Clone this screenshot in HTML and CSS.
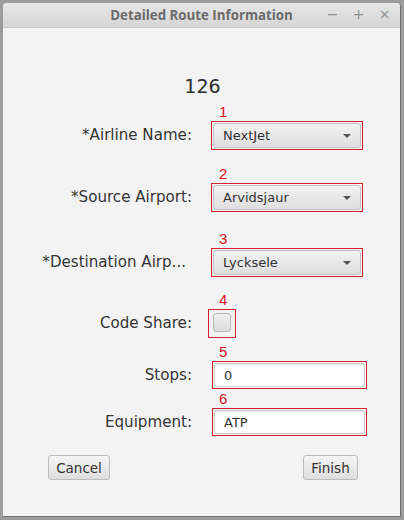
FILE: index.html
```html
<!DOCTYPE html>
<html>
<head>
<meta charset="utf-8">
<link rel="stylesheet" href="styles.css">
</head>
<body>
<div class="window">
  <div class="titlebar">
    <div class="title">Detailed Route Information</div>
    <div class="controls"><span class="ctl">&minus;</span><span class="ctl">+</span><span class="ctl">&times;</span></div>
  </div>
  <div class="content">
    <div class="id">126</div>

    <div class="row r1">
      <div class="label">*Airline Name:</div>
      <div class="field"><div class="num">1</div><div class="hl hl-combo"><div class="combo"><span>NextJet</span><span class="arrow"></span></div></div></div>
    </div>
    <div class="row r2">
      <div class="label">*Source Airport:</div>
      <div class="field"><div class="num">2</div><div class="hl hl-combo"><div class="combo"><span>Arvidsjaur</span><span class="arrow"></span></div></div></div>
    </div>
    <div class="row r3">
      <div class="label label-trunc">*Destination Airp...</div>
      <div class="field"><div class="num">3</div><div class="hl hl-combo"><div class="combo"><span>Lycksele</span><span class="arrow"></span></div></div></div>
    </div>
    <div class="row r4">
      <div class="label">Code Share:</div>
      <div class="field field-check"><div class="num">4</div><div class="hl hl-check"><div class="check"></div></div></div>
    </div>
    <div class="row r5">
      <div class="label label-text">Stops:</div>
      <div class="field field-text"><div class="num">5</div><div class="hl hl-text"><div class="text">0</div></div></div>
    </div>
    <div class="row r6">
      <div class="label label-text">Equipment:</div>
      <div class="field field-text"><div class="num">6</div><div class="hl hl-text"><div class="text">ATP</div></div></div>
    </div>

    <div class="buttons">
      <div class="btn btn-cancel">Cancel</div>
      <div class="btn btn-finish">Finish</div>
    </div>
  </div>
</div>
</body>
</html>
```
FILE: styles.css
```css
html, body {
  margin: 0;
  padding: 0;
}
body {
  width: 404px;
  height: 520px;
  background: #9c9c9c;
  overflow: hidden;
  font-family: "DejaVu Sans", sans-serif;
}
.window {
  margin: 3px 0 0 3px;
  width: 397px;
  height: 513px;
  background: #f3f3f3;
  border-right: 1px solid #6e6e6e;
  border-bottom: 1px solid #6e6e6e;
  border-radius: 4px 4px 0 0;
  overflow: hidden;
  position: relative;
}
.titlebar {
  height: 25px;
  background: linear-gradient(#e6e6e6, #d6d6d6);
  border-bottom: 1px solid #c9c9c9;
  box-sizing: border-box;
  display: flex;
  align-items: center;
  justify-content: center;
  position: relative;
}
.title {
  font-family: "Open Sans", sans-serif;
  font-weight: bold;
  font-size: 13.3px;
  color: #6b6b6b;
}
.controls {
  position: absolute;
  right: 9px;
  top: 3px;
  display: flex;
  gap: 13px;
  font-family: "DejaVu Sans", sans-serif;
  font-size: 14px;
  color: #8e8e8e;
}
.ctl {
  width: 13px;
  text-align: center;
}
.content {
  display: flex;
  flex-direction: column;
}
.id {
  margin-top: 47px;
  height: 22px;
  line-height: 22px;
  text-align: center;
  font-size: 19px;
  color: #2e2e2e;
  margin-left: 2px;
}
.row {
  display: flex;
  align-items: flex-end;
}
.r1 { margin-top: 8px; }
.r2 { margin-top: 17px; }
.r3 { margin-top: 20px; }
.r4 { margin-top: 16px; }
.r5 { margin-top: 7px; }
.r6 { margin-top: 3px; }
.label {
  width: 189px;
  height: 29px;
  line-height: 29px;
  text-align: right;
  font-size: 15.1px;
  color: #333;
  white-space: nowrap;
  box-sizing: border-box;
}
.label-trunc {
  padding-right: 6px;
}
.label-text {
  height: 28px;
  line-height: 28px;
}
.field {
  margin-left: 19px;
  display: flex;
  flex-direction: column;
}
.field-check {
  margin-left: 16px;
}
.field-text {
  margin-left: 20px;
}
.num {
  height: 14px;
  line-height: 14px;
  margin-bottom: 2px;
  padding-left: 8px;
  font-family: "Liberation Sans", sans-serif;
  font-size: 15px;
  color: #d9141e;
}
.field-check .num { padding-left: 11px; }
.field-text .num { padding-left: 7px; }
.hl {
  border: 1px solid #d2222c;
  box-sizing: border-box;
  padding: 1px;
}
.hl-combo { width: 152px; height: 29px; }
.hl-check { width: 28px; height: 29px; padding: 3px 4px; }
.hl-text { width: 155px; height: 28px; }
.combo {
  height: 100%;
  box-sizing: border-box;
  border: 1px solid #c2c2c2;
  border-radius: 3px;
  background: linear-gradient(#f2f2f2, #dedede);
  display: flex;
  align-items: center;
  justify-content: space-between;
  padding: 0 9px 0 9px;
  font-size: 13px;
  color: #333;
}
.arrow {
  width: 0;
  height: 0;
  border-left: 4px solid transparent;
  border-right: 4px solid transparent;
  border-top: 4px solid #555;
  margin-top: 1px;
}
.check {
  width: 18px;
  height: 19px;
  box-sizing: border-box;
  border: 1px solid #b8b8b8;
  border-radius: 3px;
  background: linear-gradient(#f0f0f0, #dcdcdc);
}
.text {
  height: 100%;
  box-sizing: border-box;
  border: 1px solid #cfcfcf;
  border-radius: 2px;
  background: #fff;
  box-shadow: inset 0 1px 1px #e4e4e4;
  padding-left: 9px;
  display: flex;
  align-items: center;
  font-size: 13px;
  color: #333;
}
.buttons {
  margin-top: 19px;
  display: flex;
  justify-content: space-between;
  padding: 0 42px 0 45px;
}
.btn {
  height: 25px;
  box-sizing: border-box;
  border: 1px solid #bcbcbc;
  border-radius: 3px;
  background: linear-gradient(#f5f5f5, #dedede);
  font-size: 13.5px;
  color: #333;
  display: flex;
  align-items: center;
  justify-content: center;
}
.btn-cancel { width: 62px; }
.btn-finish { width: 55px; }
```
